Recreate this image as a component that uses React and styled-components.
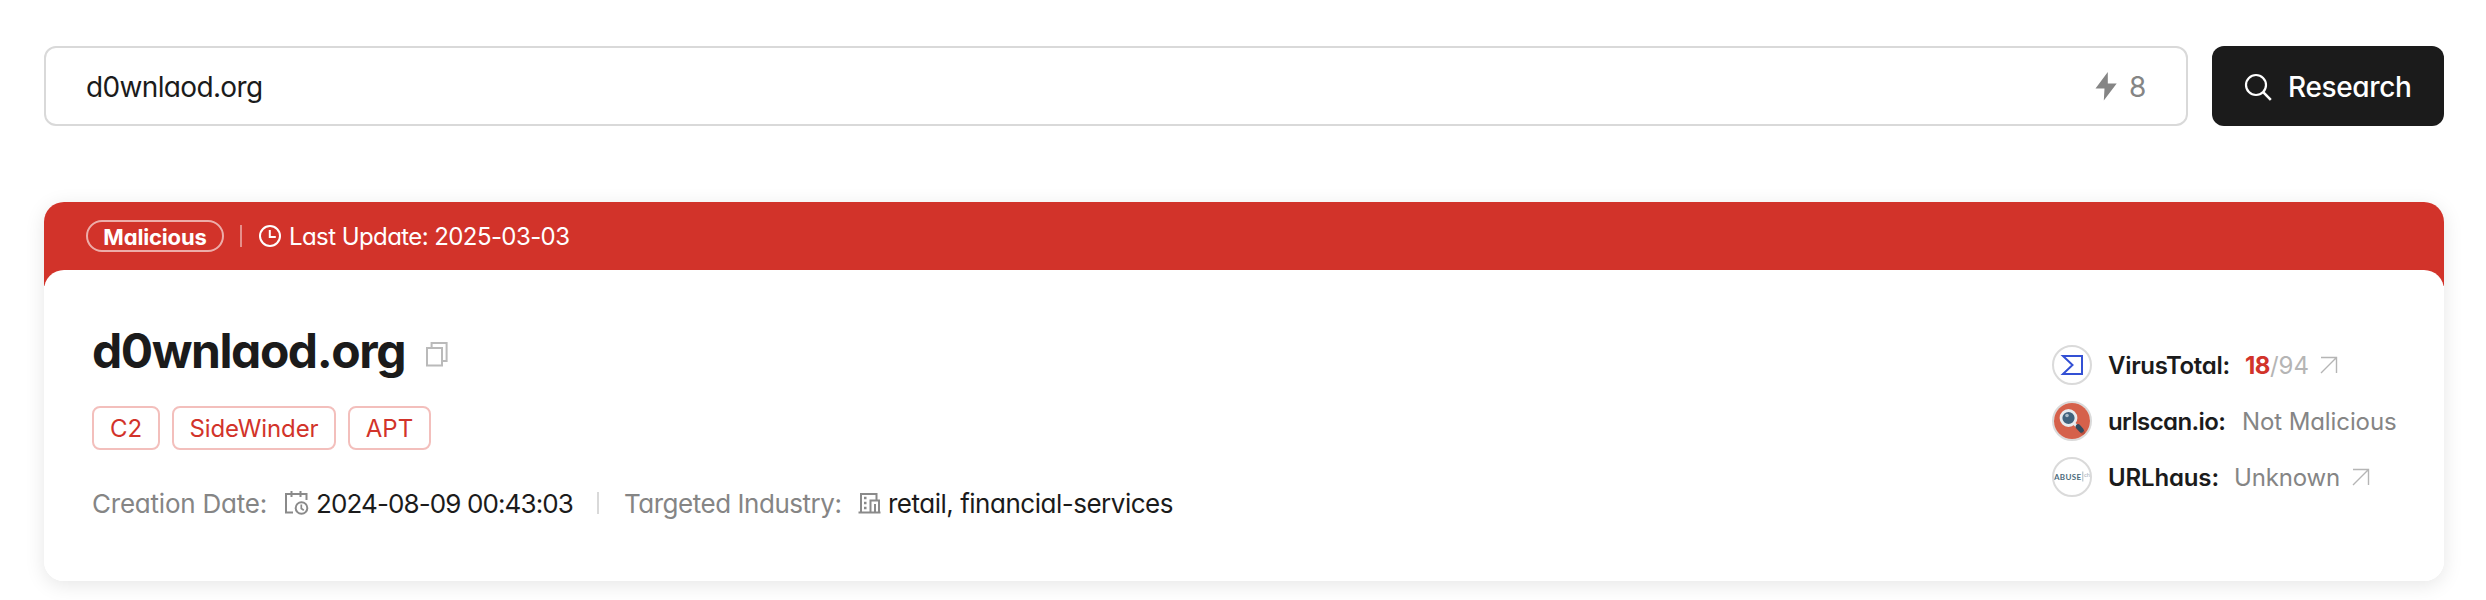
import React from "react";
import styled, { createGlobalStyle } from "styled-components";

const GlobalStyle = createGlobalStyle`
  * { box-sizing: border-box; }
  body {
    margin: 0;
    background: #fff;
    color: #1b1b1b;
    font-family: Inter, "Liberation Sans", sans-serif;
    font-feature-settings: "cv11";
  }
`;

const Page = styled.main`
  padding: 46px 42px 0 44px;
  height: 600px;
  overflow: hidden;
`;

const Text = styled.span`
  display: block;
  flex: none;
  white-space: nowrap;
  width: ${(p) => (p.$width ? `${p.$width}px` : "auto")};
  font-size: ${(p) => p.$size}px;
  font-weight: ${(p) => p.$weight || 400};
  letter-spacing: ${(p) => p.$track || 0}px;
  color: ${(p) => p.$color || "inherit"};
  line-height: 32px;
`;

const SearchRow = styled.div`
  display: flex;
  gap: 24px;
  height: 80px;
`;

const SearchField = styled.div`
  flex: 1;
  display: flex;
  align-items: center;
  justify-content: space-between;
  padding: 2px 40px 0 40px;
  border: 2px solid #d9d9d9;
  border-radius: 12px;
`;

const Credits = styled.div`
  display: flex;
  align-items: center;
  gap: 12px;
  color: #858585;

  svg { margin-top: -3px; }
`;

const ResearchButton = styled.button`
  display: flex;
  align-items: center;
  width: 232px;
  padding: 1px 0 0 32px;
  gap: 16px;
  border: 0;
  border-radius: 12px;
  background: #1b1b1b;
  color: #fff;
  font-family: inherit;
  font-feature-settings: inherit;

  svg { flex: none; }
`;

const Card = styled.section`
  margin-top: 76px;
  height: 379px;
  border-radius: 20px;
  background: linear-gradient(#d2332a 0 84px, #fff 84px);
  box-shadow: 0 4px 20px rgba(0, 0, 0, 0.1);
`;

const CardHeader = styled.header`
  display: flex;
  align-items: center;
  height: 68px;
  padding: 0 42px;
  color: #fff;
`;

const Badge = styled.div`
  display: flex;
  align-items: center;
  justify-content: center;
  width: 138px;
  height: 32px;
  padding-top: 1px;
  border: 2px solid rgba(255, 255, 255, 0.6);
  border-radius: 16px;
`;

const Updated = styled.div`
  display: flex;
  align-items: center;
  gap: 7px;

  span { padding-top: 2px; }
`;

const Divider = styled.i`
  width: 2px;
  height: ${(p) => p.$height}px;
  margin: ${(p) => p.$margin};
  background: ${(p) => p.$color};
`;

const CardBody = styled.div`
  display: flex;
  justify-content: space-between;
  height: 311px;
  padding: 0 46px 0 48px;
  border-radius: 20px;
  background: #fff;
`;

const Summary = styled.div`
  padding-top: 50px;
`;

const Title = styled.h1`
  display: flex;
  align-items: center;
  gap: 20px;
  height: 62px;
  margin: 0;

  svg { margin-top: 6px; }
`;

const Tags = styled.div`
  display: flex;
  gap: 12px;
  margin-top: 24px;
`;

const Tag = styled.div`
  display: flex;
  align-items: center;
  justify-content: center;
  width: ${(p) => p.$width}px;
  height: 44px;
  padding-top: 1px;
  border: 2px solid #f3bfbc;
  border-radius: 8px;
  color: #d2332a;
`;

const Meta = styled.div`
  display: flex;
  align-items: center;
  height: 32px;
  margin-top: 38px;

  svg { flex: none; margin: -3px 7px 0 17px; }
`;

const Sources = styled.ul`
  display: flex;
  flex-direction: column;
  gap: 16px;
  width: 346px;
  margin: 0;
  padding: 75px 0 0;
  list-style: none;
`;

const Source = styled.li`
  display: flex;
  align-items: center;
  height: 40px;

  > span { padding-top: 1px; }
`;

const Logo = styled.div`
  flex: none;
  width: 40px;
  height: 40px;
  margin-right: 16px;
  border: 2px solid #dadada;
  border-radius: 50%;
  overflow: hidden;

  svg { display: block; }
`;

const ArrowWrap = styled.div`
  display: flex;
  margin-left: ${(p) => p.$gap}px;
`;

const Arrow = ({ gap }) => (
  <ArrowWrap $gap={gap}>
    <svg width="18" height="18" fill="none" stroke="#b5b5b5" strokeWidth="1.4">
      <path d="M1 1.5h15.5v15.5M16.5 1.5L1 17" />
    </svg>
  </ArrowWrap>
);

const BoltIcon = () => (
  <svg width="22" height="30" fill="#858585">
    <path d="M12.8 1L0.5 17.6h9L8.8 29.4L21.7 12.6h-8.9z" />
  </svg>
);

const SearchIcon = () => (
  <svg width="28" height="28" fill="none" stroke="#fff" strokeWidth="2.2">
    <circle cx="12" cy="12" r="10" />
    <path d="M19.2 19.2l7.6 7.6" strokeWidth="2.6" />
  </svg>
);

const ClockIcon = () => (
  <svg width="24" height="24" fill="none" stroke="#fff" strokeWidth="2">
    <circle cx="12" cy="12" r="10" />
    <path d="M11.8 6v7h6" />
  </svg>
);

const CopyIcon = () => (
  <svg width="24" height="26" fill="none" stroke="#bababa" strokeWidth="2">
    <path d="M2 7h15v17.5H2z" />
    <path d="M6.6 7V2h15v18h-4.6" />
  </svg>
);

const CalendarIcon = () => (
  <svg width="25" height="26" fill="none" stroke="#8a8a8a" strokeWidth="2">
    <path d="M9 22.5H2V4h20.5v6" />
    <path d="M7.5 1v6M16.5 1v6" />
    <circle cx="17.5" cy="18" r="5.8" />
    <path d="M17.3 14.5v4l2.5 1.8" strokeWidth="1.7" />
  </svg>
);

const BuildingIcon = () => (
  <svg width="23" height="24" fill="none" stroke="#8a8a8a" strokeWidth="2">
    <path d="M0.5 21.5h22M3 21V3h15.500v6M12.5 21V9.5h8.5V21" />
    <path d="M17 21v-8" />
    <path d="M6 7h2.5M6 12h2.500M6 17h2.5" strokeWidth="2.4" />
  </svg>
);

const VirusTotalLogo = () => (
  <svg width="36" height="36" fill="none" stroke="#3350d4" strokeWidth="2">
    <path d="M9 9h19v18H9l9.5-9z" />
  </svg>
);

const UrlscanLogo = () => (
  <svg width="36" height="36">
    <rect width="36" height="36" fill="#d5614b" />
    <path d="M23 23.5l6 6" stroke="#b9503e" strokeWidth="4.5" strokeLinecap="round" />
    <path d="M19.500 20l4 4" stroke="#e6e9ec" strokeWidth="3" />
    <path d="M24 23.500l3.500 3.800" stroke="#324a5e" strokeWidth="4.8" strokeLinecap="round" />
    <circle cx="14.5" cy="15" r="7.5" fill="#41627d" stroke="#e8ebee" strokeWidth="2.8" />
    <circle cx="13" cy="12.5" r="1.8" fill="#a9bac7" />
  </svg>
);

const AbuseLogo = () => (
  <svg width="36" height="36">
    <text x="0" y="20.5" fontSize="8" fontWeight="700" fontFamily="Lato, sans-serif" fill="#4c6b7b" textLength="27">ABUSE</text>
    <path d="M28.8 12.5v10" stroke="#a9b7bf" strokeWidth="1" />
    <text x="30" y="17.5" fontSize="6" fontFamily="Lato, sans-serif" fill="#9badb7" textLength="6">ch</text>
  </svg>
);

export default function App() {
  return (
    <Page>
      <GlobalStyle />
      <SearchRow>
        <SearchField>
          <Text $size={28} $track={-0.65}>d0wnlaod.org</Text>
          <Credits>
            <BoltIcon />
            <Text $size={28} $width={17}>8</Text>
          </Credits>
        </SearchField>
        <ResearchButton>
          <SearchIcon />
          <Text $size={28} $weight={500} $track={-0.35}>Research</Text>
        </ResearchButton>
      </SearchRow>

      <Card>
        <CardHeader>
          <Badge>
            <Text $size={22} $weight={700} $track={-0.15}>Malicious</Text>
          </Badge>
          <Divider $height={22} $margin="0 16px 0 16px" $color="rgba(255,255,255,0.45)" />
          <Updated>
            <ClockIcon />
            <Text $size={24} $track={-0.58}>Last Update: 2025-03-03</Text>
          </Updated>
        </CardHeader>

        <CardBody>
          <Summary>
            <Title>
              <Text $size={48} $weight={700} $track={-1.45} $width={313}>d0wnlaod.org</Text>
              <CopyIcon />
            </Title>
            <Tags>
              <Tag $width={68}><Text $size={24}>C2</Text></Tag>
              <Tag $width={164}><Text $size={24} $track={-0.1}>SideWinder</Text></Tag>
              <Tag $width={83}><Text $size={24}>APT</Text></Tag>
            </Tags>
            <Meta>
              <Text $size={26} $color="#858585" $track={-0.22} $width={175}>Creation Date:</Text>
              <CalendarIcon />
              <Text $size={26} $track={-0.89} $width={257}>2024-08-09 00:43:03</Text>
              <Divider $height={22} $margin="-3px 25px 0 24px" $color="#d9d9d9" />
              <Text $size={26} $color="#858585" $track={-0.47} $width={217}>Targeted Industry:</Text>
              <BuildingIcon />
              <Text $size={26} $track={-0.49}>retail, financial-services</Text>
            </Meta>
          </Summary>

          <Sources>
            <Source>
              <Logo><VirusTotalLogo /></Logo>
              <Text $size={24} $weight={600} $track={-0.3} $width={137}>VirusTotal:</Text>
              <Text $size={24} $weight={700} $track={-0.5} $color="#d2332a">18</Text>
              <Text $size={24} $color="#b5b5b5">/94</Text>
              <Arrow gap={11} />
            </Source>
            <Source>
              <Logo><UrlscanLogo /></Logo>
              <Text $size={24} $weight={600} $track={-0.6} $width={134}>urlscan.io:</Text>
              <Text $size={24} $color="#858585" $track={-0.1}>Not Malicious</Text>
            </Source>
            <Source>
              <Logo><AbuseLogo /></Logo>
              <Text $size={24} $weight={600} $track={-0.15} $width={126}>URLhaus:</Text>
              <Text $size={24} $color="#858585" $track={-0.17}>Unknown</Text>
              <Arrow gap={12} />
            </Source>
          </Sources>
        </CardBody>
      </Card>
    </Page>
  );
}
